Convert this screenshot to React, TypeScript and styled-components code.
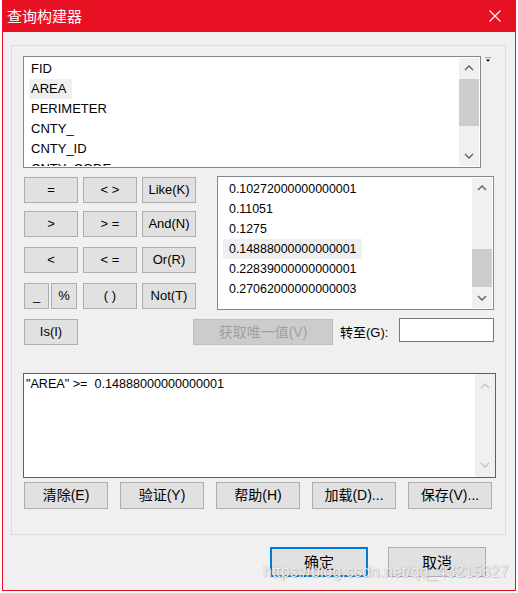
import React from 'react';
import styled, { createGlobalStyle } from 'styled-components';

const GlobalStyle = createGlobalStyle`
  body {
    margin: 0;
    background: #ffffff;
    font-family: "Liberation Sans", "Noto Sans CJK SC", sans-serif;
  }
`;

const fields = ['FID', 'AREA', 'PERIMETER', 'CNTY_', 'CNTY_ID', 'CNTY_CODE'];
const values = [
  '0.10272000000000001',
  '0.11051',
  '0.1275',
  '0.14888000000000001',
  '0.22839000000000001',
  '0.27062000000000003',
];
const actions = ['清除(E)', '验证(Y)', '帮助(H)', '加载(D)...', '保存(V)...'];

const Chevron = ({ down, color }: { down?: boolean; color: string }) => (
  <svg width="10" height="6" viewBox="0 0 10 6">
    <polyline
      points={down ? '1,1 5,5 9,1' : '1,5 5,1 9,5'}
      fill="none"
      stroke={color}
      strokeWidth="1.4"
    />
  </svg>
);

const ScrollBar = ({
  thumbTop,
  thumbHeight,
  arrow = 20,
  disabled,
}: {
  thumbTop?: number;
  thumbHeight?: number;
  arrow?: number;
  disabled?: boolean;
}) => {
  const color = disabled ? '#c2c2c2' : '#606060';
  return (
    <Bar>
      <Arrow $h={arrow}>
        <Chevron color={color} />
      </Arrow>
      <Track>{thumbHeight ? <Thumb $top={thumbTop || 0} $h={thumbHeight} /> : null}</Track>
      <Arrow $h={arrow}>
        <Chevron down color={color} />
      </Arrow>
    </Bar>
  );
};

const App = () => {
  return (
    <>
      <GlobalStyle />
      <Window>
        <TitleBar>
          <Title>查询构建器</Title>
          <CloseIcon width="12" height="12" viewBox="0 0 12 12">
            <path d="M0.5 0.5 L11.5 11.5 M11.5 0.5 L0.5 11.5" stroke="#ffffff" strokeWidth="1.1" />
          </CloseIcon>
        </TitleBar>

        <GroupBox>
          <FieldRow>
            <ListBox $w={458} $h={112}>
              <Items $pad={4}>
                {fields.map((f) => (
                  <Item key={f} $selected={f === 'AREA'} $size={13} $padL={2}>
                    {f}
                  </Item>
                ))}
              </Items>
              <ScrollBar thumbTop={1} thumbHeight={47} />
            </ListBox>
            <Marker width="6" height="6" viewBox="0 0 6 6">
              <line x1="0" y1="0.5" x2="6" y2="0.5" stroke="#a0a0a0" strokeWidth="1" />
              <polygon points="1,2.5 5,2.5 3,4.8" fill="#000000" />
            </Marker>
          </FieldRow>

          <Middle>
            <OpGrid>
              <OpButton>=</OpButton>
              <OpButton>&lt; &gt;</OpButton>
              <OpButton>Like(K)</OpButton>
              <OpButton>&gt;</OpButton>
              <OpButton>&gt; =</OpButton>
              <OpButton>And(N)</OpButton>
              <OpButton>&lt;</OpButton>
              <OpButton>&lt; =</OpButton>
              <OpButton>Or(R)</OpButton>
              <Pair>
                <OpButton $w={25}>_</OpButton>
                <OpButton $w={26}>%</OpButton>
              </Pair>
              <OpButton>( )</OpButton>
              <OpButton>Not(T)</OpButton>
            </OpGrid>
            <ListBox $w={277} $h={134}>
              <Items $pad={4}>
                {values.map((v) => (
                  <Item key={v} $selected={v === '0.14888000000000001'} $size={12.4} $padL={6}>
                    {v}
                  </Item>
                ))}
              </Items>
              <ScrollBar thumbTop={51} thumbHeight={38} />
            </ListBox>
          </Middle>

          <ToolRow>
            <OpButton>Is(I)</OpButton>
            <UniqueButton disabled>获取唯一值(V)</UniqueButton>
            <GoLabel>转至(G):</GoLabel>
            <GoInput />
          </ToolRow>

          <Expression>
            <ExprText>"AREA" &gt;=&nbsp; 0.14888000000000001</ExprText>
            <ScrollBar arrow={24} disabled />
          </Expression>

          <ActionRow>
            {actions.map((a) => (
              <ActionButton key={a}>{a}</ActionButton>
            ))}
          </ActionRow>
        </GroupBox>

        <Footer>
          <DialogButton $primary>确定</DialogButton>
          <DialogButton>取消</DialogButton>
        </Footer>

        <Watermark>https://blog.csdn.net/qq_43215827</Watermark>
      </Window>
    </>
  );
};

const Window = styled.div`
  position: relative;
  box-sizing: border-box;
  margin-left: 2px;
  width: 514px;
  height: 591px;
  border: 1px solid #e81123;
  border-top: none;
  background: #f0f0f0;
`;

const TitleBar = styled.div`
  display: flex;
  align-items: center;
  height: 32px;
  padding-left: 4px;
  padding-right: 14px;
  background: #e81123;
`;

const Title = styled.span`
  color: #ffffff;
  font-family: "Noto Sans CJK SC", sans-serif;
  font-size: 15px;
  line-height: 20px;
`;

const CloseIcon = styled.svg`
  margin-left: auto;
  display: block;
`;

const GroupBox = styled.div`
  box-sizing: border-box;
  margin: 13px 9px 0 8px;
  height: 490px;
  border: 1px solid #dcdcdc;
  padding: 10px 0 0 11px;
`;

const FieldRow = styled.div`
  display: flex;
  align-items: flex-start;
`;

const Marker = styled.svg`
  display: block;
  margin: 1px 0 0 4px;
`;

const ListBox = styled.div<{ $w: number; $h: number }>`
  box-sizing: border-box;
  display: flex;
  width: ${(p) => p.$w}px;
  height: ${(p) => p.$h}px;
  padding: 1px;
  border: 1px solid #828790;
  background: #ffffff;
  overflow: hidden;
`;

const Items = styled.div<{ $pad: number }>`
  flex: 1;
  display: flex;
  flex-direction: column;
  align-items: flex-start;
  padding-left: ${(p) => p.$pad}px;
  padding-top: 1px;
  overflow: hidden;
`;

const Item = styled.div<{ $selected?: boolean; $size: number; $padL: number }>`
  flex: none;
  height: 20px;
  line-height: 20px;
  padding: 0 6px 0 ${(p) => p.$padL}px;
  font-size: ${(p) => p.$size}px;
  color: #000000;
  white-space: nowrap;
  background: ${(p) => (p.$selected ? '#efefef' : 'transparent')};
`;

const Bar = styled.div`
  flex: none;
  display: flex;
  flex-direction: column;
  width: 20px;
  background: #f0f0f0;
`;

const Arrow = styled.div<{ $h: number }>`
  flex: none;
  height: ${(p) => p.$h}px;
  display: flex;
  align-items: center;
  justify-content: center;
  svg {
    display: block;
  }
`;

const Track = styled.div`
  flex: 1;
`;

const Thumb = styled.div<{ $top: number; $h: number }>`
  margin-top: ${(p) => p.$top}px;
  height: ${(p) => p.$h}px;
  background: #cdcdcd;
`;

const Middle = styled.div`
  display: flex;
  align-items: flex-start;
  margin-top: 8px;
  padding-left: 1px;
`;

const OpGrid = styled.div`
  display: grid;
  grid-template-columns: 54px 54px 54px;
  grid-template-rows: 34px 36px 36px 26px;
  column-gap: 5px;
  align-items: start;
  padding-top: 1px;
  margin-right: 21px;
  width: 172px;
`;

const Pair = styled.div`
  display: flex;
  gap: 2px;
`;

const OpButton = styled.button<{ $w?: number }>`
  box-sizing: border-box;
  width: ${(p) => (p.$w ? `${p.$w}px` : '54px')};
  height: 26px;
  padding: 0;
  border: 1px solid #adadad;
  background: #e1e1e1;
  color: #000000;
  font-family: "Liberation Sans", "Noto Sans CJK SC", sans-serif;
  font-size: 13px;
  line-height: 24px;
  white-space: nowrap;
`;

const ToolRow = styled.div`
  display: flex;
  align-items: flex-start;
  margin-top: 8px;
  padding-left: 1px;
  ${OpButton} {
    margin-top: 1px;
  }
`;

const UniqueButton = styled.button`
  box-sizing: border-box;
  width: 140px;
  height: 26px;
  margin: 1px 0 0 115px;
  padding: 0;
  border: 1px solid #bfbfbf;
  background: #cccccc;
  color: #a0a0a0;
  font-family: "Liberation Sans", "Noto Sans CJK SC", sans-serif;
  font-size: 14px;
  line-height: 24px;
`;

const GoLabel = styled.span`
  box-sizing: border-box;
  flex: none;
  width: 66px;
  padding-left: 7px;
  margin-top: 2px;
  font-size: 13px;
  line-height: 26px;
  color: #000000;
  white-space: nowrap;
`;

const GoInput = styled.div`
  box-sizing: border-box;
  flex: none;
  width: 95px;
  height: 24px;
  border: 1px solid #7a7a7a;
  background: #ffffff;
`;

const Expression = styled.div`
  box-sizing: border-box;
  display: flex;
  width: 473px;
  height: 105px;
  margin-top: 27px;
  border: 1px solid #0078d7;
  background: #ffffff;
`;

const ExprText = styled.div`
  flex: 1;
  padding: 1px 2px;
  font-size: 12.6px;
  line-height: 18px;
  color: #000000;
  white-space: pre;
`;

const ActionRow = styled.div`
  display: flex;
  gap: 12px;
  margin-top: 4px;
  padding-left: 1px;
`;

const ActionButton = styled.button`
  box-sizing: border-box;
  width: 84px;
  height: 27px;
  padding: 0;
  border: 1px solid #adadad;
  background: #e1e1e1;
  color: #000000;
  font-family: "Liberation Sans", "Noto Sans CJK SC", sans-serif;
  font-size: 14px;
  line-height: 25px;
  white-space: nowrap;
`;

const Footer = styled.div`
  display: flex;
  justify-content: flex-end;
  gap: 20px;
  margin-top: 12px;
  padding-right: 29px;
`;

const DialogButton = styled.button<{ $primary?: boolean }>`
  box-sizing: border-box;
  width: 98px;
  height: 30px;
  padding: 0;
  border: ${(p) => (p.$primary ? '2px solid #0078d7' : '1px solid #adadad')};
  background: #e1e1e1;
  color: #000000;
  font-family: "Noto Sans CJK SC", sans-serif;
  font-size: 15px;
  line-height: 26px;
`;

const Watermark = styled.div`
  position: absolute;
  left: 260px;
  top: 563px;
  font-family: "Liberation Sans", sans-serif;
  font-size: 16px;
  line-height: 18px;
  color: rgba(255, 255, 255, 0.85);
  text-shadow: 0 0 1px rgba(120, 120, 120, 0.6), 1px 1px 1px rgba(0, 0, 0, 0.15);
  pointer-events: none;
  white-space: nowrap;
`;

export default App;
